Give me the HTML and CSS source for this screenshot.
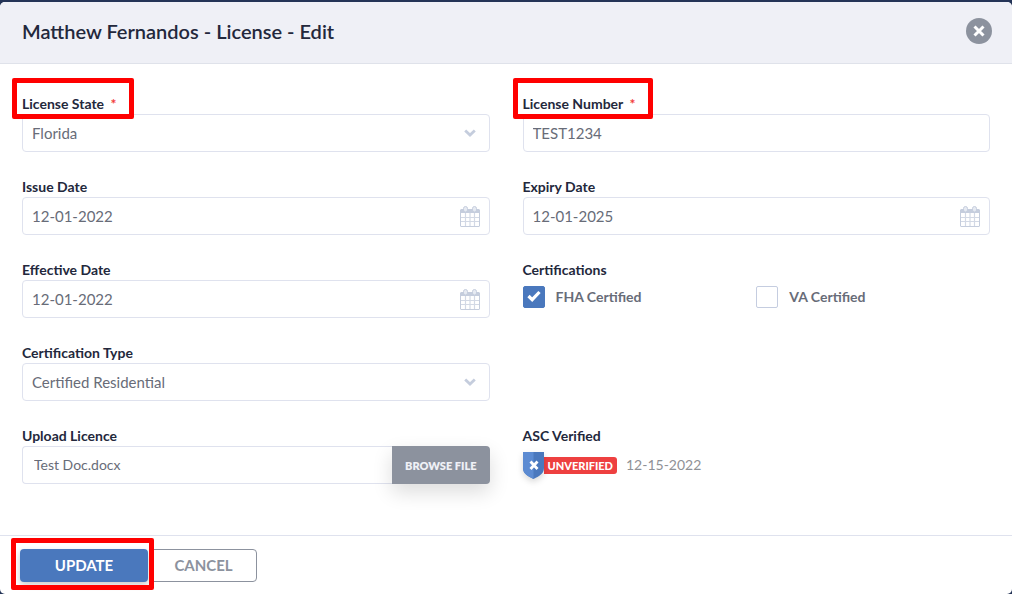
FILE: index.html
```html
<!DOCTYPE html>
<html lang="en">
<head>
<meta charset="UTF-8">
<meta name="viewport" content="width=device-width, initial-scale=1.0">
<title>License - Edit</title>
<link rel="stylesheet" href="styles.css">
</head>
<body>
<svg class="sprite" aria-hidden="true">
  <symbol id="calendar" viewBox="0 0 20 21">
    <path d="M1 3h18l1 1v16l-1 1H1l-1-1V4z" fill="currentColor"/>
    <path d="M1 7h18v13H1z" fill="#fff"/>
    <path d="M1 11.500h18M1 15.500h18M5.500 7v13M10 7v13M14.500 7v13" stroke="currentColor" stroke-width="1.200" opacity=".75"/>
    <rect x="3.500" y=".5" width="4" height="5.500" rx="2" fill="#e6eaf2" stroke="currentColor"/>
    <rect x="12.500" y=".5" width="4" height="5.500" rx="2" fill="#e6eaf2" stroke="currentColor"/>
  </symbol>
  <symbol id="chevron" viewBox="0 0 12 8">
    <path d="M1.200 1.500L6 6l4.800-4.500" fill="none" stroke="currentColor" stroke-width="2.800"/>
  </symbol>
</svg>
<form class="modal">
  <header class="modal-header">
    <h1 class="modal-title">Matthew Fernandos - License - Edit</h1>
    <button type="button" class="close-button" aria-label="Close">
      <svg width="14" height="14" viewBox="0 0 14 14"><path d="M2.500 2.500l9 9M11.500 2.500l-9 9" stroke="#fff" stroke-width="3"/></svg>
    </button>
  </header>
  <main class="modal-body">
    <div class="field">
      <label class="field-label marked" for="state">License State <span class="required">*</span></label>
      <div class="control">
        <select class="input" id="state"><option>Florida</option></select>
        <svg class="control-icon chevron"><use href="#chevron"/></svg>
      </div>
    </div>
    <div class="field">
      <label class="field-label marked" for="number">License Number <span class="required">*</span></label>
      <div class="control"><input class="input" id="number" type="text" value="TEST1234"></div>
    </div>
    <div class="field">
      <label class="field-label" for="issue">Issue Date</label>
      <div class="control">
        <input class="input" id="issue" type="text" value="12-01-2022">
        <svg class="control-icon calendar"><use href="#calendar"/></svg>
      </div>
    </div>
    <div class="field">
      <label class="field-label" for="expiry">Expiry Date</label>
      <div class="control">
        <input class="input" id="expiry" type="text" value="12-01-2025">
        <svg class="control-icon calendar"><use href="#calendar"/></svg>
      </div>
    </div>
    <div class="field">
      <label class="field-label" for="effective">Effective Date</label>
      <div class="control">
        <input class="input" id="effective" type="text" value="12-01-2022">
        <svg class="control-icon calendar"><use href="#calendar"/></svg>
      </div>
    </div>
    <div class="field" role="group" aria-labelledby="certs">
      <span class="field-label" id="certs">Certifications</span>
      <div class="checks">
        <label class="check">
          <span class="check-box">
            <input type="checkbox" checked>
            <svg width="14" height="14" viewBox="0 0 14 14"><path d="M1.500 6l3.700 3.700L12.500 2" fill="none" stroke="#fff" stroke-width="3.200"/></svg>
          </span>
          FHA Certified
        </label>
        <label class="check">
          <span class="check-box">
            <input type="checkbox">
            <svg width="14" height="14" viewBox="0 0 14 14"><path d="M1.500 6l3.700 3.700L12.500 2" fill="none" stroke="#fff" stroke-width="3.200"/></svg>
          </span>
          VA Certified
        </label>
      </div>
    </div>
    <div class="field field-left">
      <label class="field-label" for="type">Certification Type</label>
      <div class="control">
        <select class="input" id="type"><option>Certified Residential</option></select>
        <svg class="control-icon chevron"><use href="#chevron"/></svg>
      </div>
    </div>
    <div class="field field-left">
      <label class="field-label" for="upload">Upload Licence</label>
      <div class="upload">
        <input class="input upload-name" id="upload" type="text" value="Test Doc.docx" readonly>
        <button type="button" class="browse-button">BROWSE FILE</button>
      </div>
    </div>
    <div class="field">
      <span class="field-label">ASC Verified</span>
      <div class="verify">
        <svg class="shield" width="21" height="27" viewBox="0 0 21 27">
          <path d="M0 0h21v16c0 5-4 8-10.500 11C4 24 0 21 0 16z" fill="#4a78bd"/>
          <path d="M0 0h10.500v27C4 24 0 21 0 16z" fill="#5c8bd2"/>
          <path d="M7.500 9.500l7 7.500M14.500 9.500l-7 7.500" stroke="#fff" stroke-width="2.800"/>
        </svg>
        <span class="badge">UNVERIFIED</span>
        <span class="verify-date">12-15-2022</span>
      </div>
    </div>
  </main>
  <footer class="modal-footer">
    <span class="marked marked-button"><button type="submit" class="button button-primary">UPDATE</button></span>
    <button type="button" class="button button-outline">CANCEL</button>
  </footer>
</form>
</body>
</html>
```
FILE: styles.css
```css
* {
  box-sizing: border-box;
}
body {
  margin: 0;
  padding-top: 2px;
  background: #243457;
  font-family: Lato, sans-serif;
  font-size: 15px;
  color: #23283c;
}
button, input, select {
  font-family: inherit;
}
.sprite {
  display: none;
}
.modal {
  display: flex;
  flex-direction: column;
  background: #fff;
  border-radius: 5px;
}
.modal-header {
  display: flex;
  align-items: center;
  justify-content: space-between;
  padding: 16px 20px 19px 22px;
  background: #eff0f6;
  border-bottom: 1px solid #dfe2ea;
  border-radius: 5px 5px 0 0;
}
.modal-title {
  margin: 0;
  font-size: 20px;
  line-height: 26px;
  font-weight: 600;
}
.close-button {
  display: grid;
  place-items: center;
  width: 26px;
  height: 26px;
  padding: 0;
  border: none;
  border-radius: 50%;
  background: #8c929e;
  cursor: pointer;
}
.modal-body {
  display: grid;
  grid-template-columns: 1fr 1fr;
  gap: 25px 33px;
  padding: 30px 22px 51px;
}
.field {
  display: flex;
  flex-direction: column;
  align-items: flex-start;
}
.field-left {
  grid-column: 1;
}
.field-label {
  font-size: 14px;
  line-height: 20px;
  font-weight: 700;
}
.required {
  margin-left: 3px;
  color: #f23a3a;
}
/* red callout drawn over the controls */
.marked {
  position: relative;
}
.marked::after {
  content: "";
  position: absolute;
  z-index: 1;
  inset: -16px -18px -5px -10px;
  border: 5px solid #f00;
  border-radius: 2px;
  pointer-events: none;
}
.marked-button::after {
  inset: -11px -6px -8px -9px;
}
.control {
  display: grid;
  align-items: center;
  width: 100%;
}
.control > * {
  grid-area: 1 / 1;
}
.input {
  width: 100%;
  height: 38px;
  padding: 0 9px;
  border: 1px solid #dfe2ee;
  border-radius: 4px;
  background: #fff;
  color: #686c78;
  font-size: 15px;
  appearance: none;
}
.control-icon {
  justify-self: end;
  color: #c5cddd;
  pointer-events: none;
}
.chevron {
  width: 12px;
  height: 8px;
  margin-right: 14px;
}
.calendar {
  width: 20px;
  height: 21px;
  margin-right: 10px;
}
.checks {
  display: grid;
  grid-template-columns: 1fr 1fr;
  width: 100%;
  padding-top: 6px;
}
.check {
  display: flex;
  align-items: center;
  gap: 11px;
  color: #686c78;
  font-size: 14px;
  line-height: 22px;
  font-weight: 700;
}
.check-box {
  display: grid;
  place-items: center;
}
.check-box > * {
  grid-area: 1 / 1;
}
.check-box svg {
  pointer-events: none;
}
.check-box input {
  width: 22px;
  height: 22px;
  margin: 0;
  border: 1px solid #c5cde0;
  border-radius: 2px;
  background: #fff;
  appearance: none;
}
.check-box input:checked {
  border-color: #4a78bd;
  background: #4a78bd;
}
.upload {
  display: flex;
  width: 100%;
}
.upload-name {
  flex: 1;
  min-width: 0;
  padding: 0 11px 2px;
  border-right: none;
  border-radius: 4px 0 0 4px;
  font-size: 14px;
}
.browse-button {
  padding: 0 13px;
  border: none;
  border-radius: 0 4px 4px 0;
  background: #8c929e;
  color: #eff0f6;
  font-size: 11px;
  font-weight: 800;
  box-shadow: 0 8px 20px rgba(0, 0, 0, 0.14);
  cursor: pointer;
}
.verify {
  display: flex;
  align-items: center;
  padding-top: 6px;
}
.shield {
  z-index: 1;
  filter: drop-shadow(0 3px 3px rgba(0, 0, 0, 0.15));
}
.badge {
  padding: 0 4px;
  border-radius: 0 3px 3px 0;
  background: #ee4040;
  color: #fff;
  font-size: 11px;
  line-height: 17px;
  font-weight: 900;
}
.verify-date {
  margin-left: 9px;
  padding-bottom: 2px;
  color: #8f9196;
  font-size: 14px;
}
.modal-footer {
  display: flex;
  gap: 2px;
  padding: 13px 20px 12px;
  border-top: 1px solid #dfe2ee;
}
.button {
  height: 33px;
  padding: 0 6px 2px;
  border-radius: 4px;
  font-size: 15px;
  font-weight: 700;
  cursor: pointer;
}
.button-primary {
  min-width: 128px;
  border: none;
  background: #4a78bd;
  color: #fff;
  box-shadow: 0 3px 6px rgba(0, 0, 0, 0.2);
}
.button-outline {
  min-width: 107px;
  border: 1px solid #8c929e;
  background: #fff;
  color: #8c929e;
}
```
